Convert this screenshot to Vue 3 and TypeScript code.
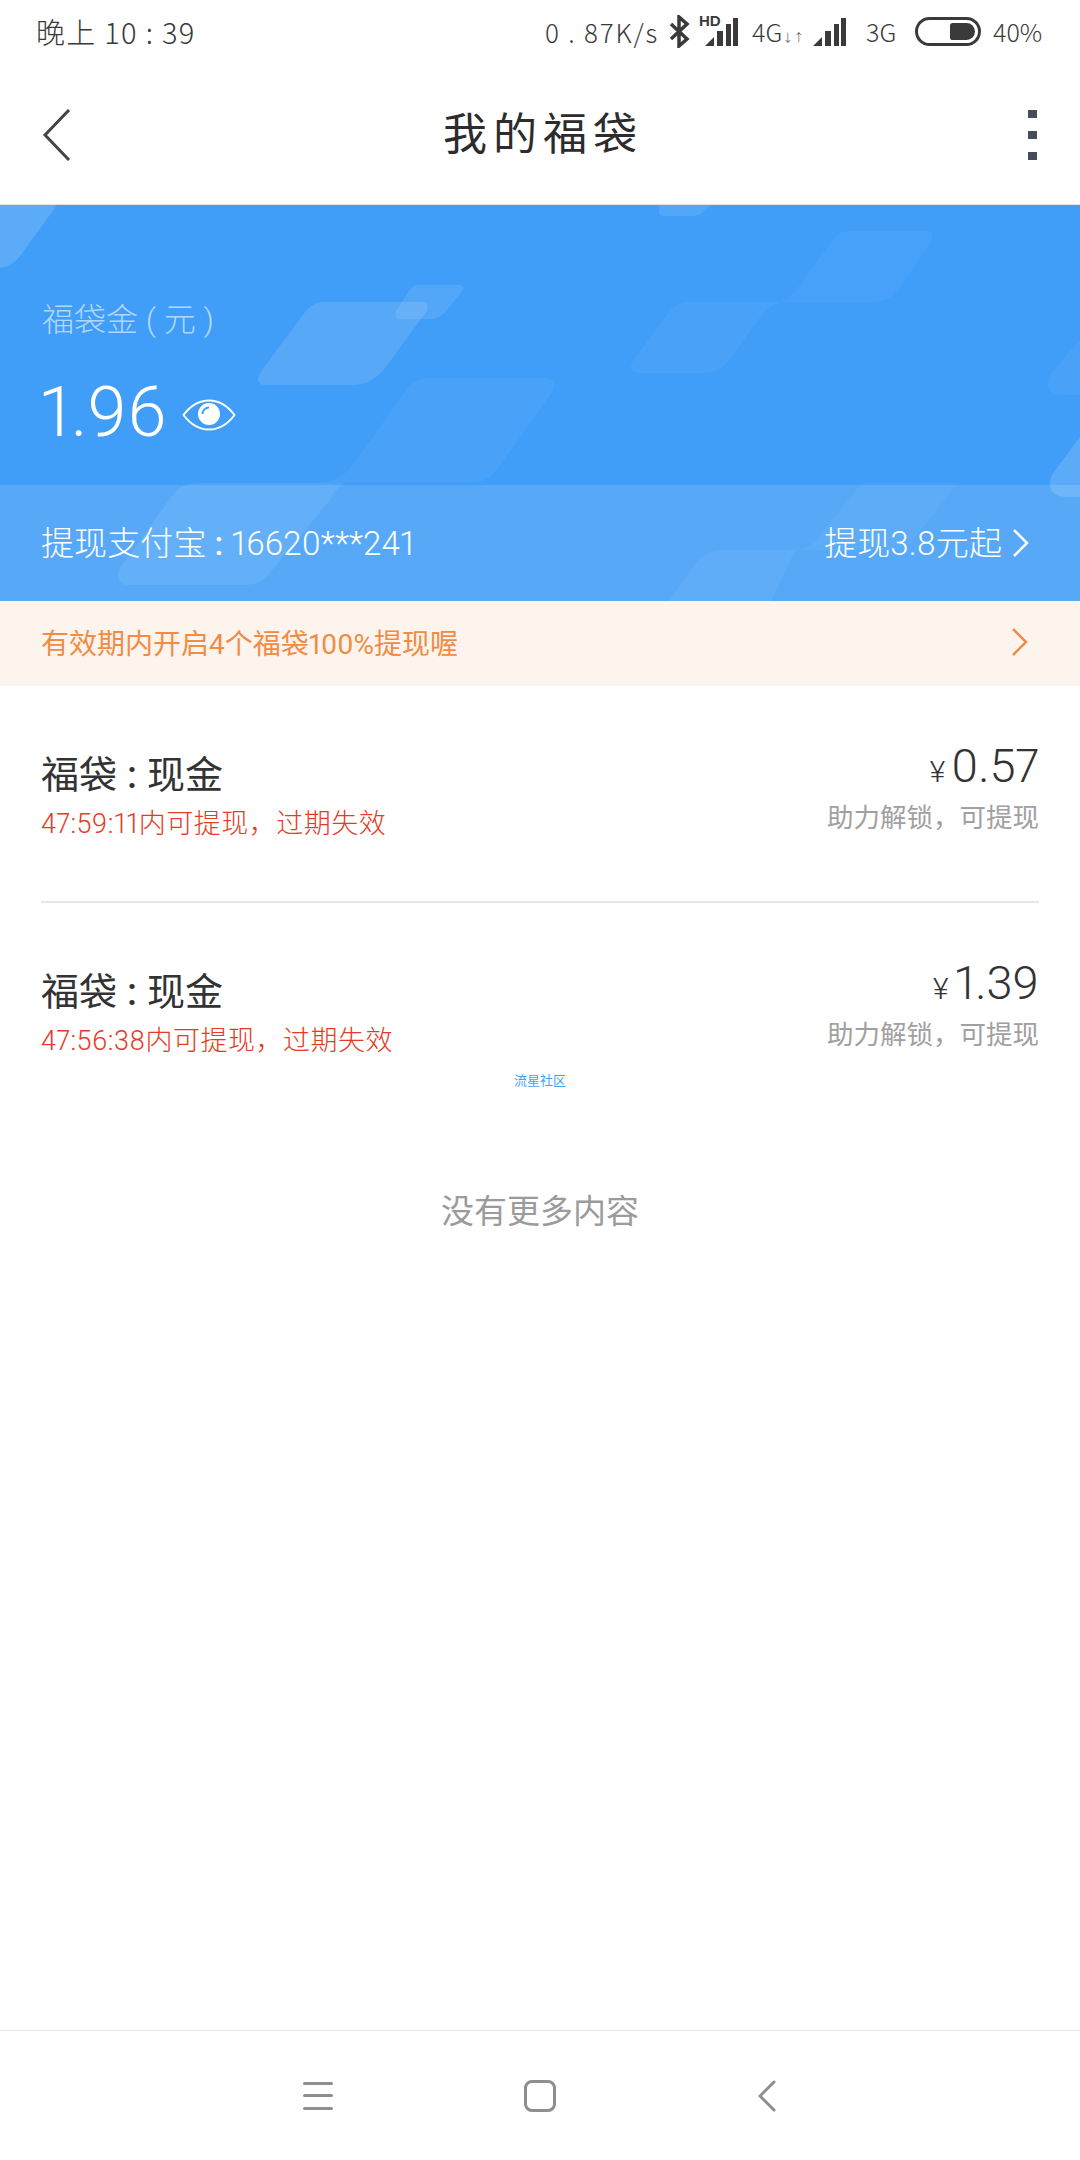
<script setup lang="ts">
interface Bag {
  kind: string
  countdown: string
  amount: string
  note: string
}

const bags: Bag[] = [
  { kind: "现金", countdown: "47:59:11内可提现，过期失效", amount: "0.57", note: "助力解锁，可提现" },
  { kind: "现金", countdown: "47:56:38内可提现，过期失效", amount: "1.39", note: "助力解锁，可提现" }
]

// pale slanted shapes behind the balance card
const shapes: { d: string; o: number }[] = [
  { d: "M0 205H57L20 256Q12 267 0 268Z", o: 0.14 },
  { d: "M322 302H420Q431 302 426 312L385 368Q372 385 352 385H266Q254 385 260 373L302 316Q312 302 322 302Z", o: 0.12 },
  { d: "M418 285H458Q466 285 462 291L447 310Q440 319 430 319H402Q392 319 397 310L408 293Q412 285 418 285Z", o: 0.1 },
  { d: "M428 378H545Q558 378 552 392L498 468Q488 483 468 483H320Q342 480 352 466L405 392Q414 378 428 378Z", o: 0.05 },
  { d: "M200 483H344Q334 490 330 500L272 570Q262 585 245 585H130Q114 585 119 570L172 496Q180 483 200 483Z", o: 0.08 },
  { d: "M690 302H781Q768 306 758 320L729 360Q720 373 700 373H640Q627 373 633 361L668 314Q676 302 690 302Z", o: 0.05 },
  { d: "M848 231H925Q935 231 931 241L898 290Q889 302 875 302H781Q792 298 800 285L833 240Q840 231 848 231Z", o: 0.04 },
  { d: "M659 205H711L703 212Q699 216 690 216H665Q657 216 659 208Z", o: 0.1 },
  { d: "M1080 340V395H1062Q1042 393 1050 375Z", o: 0.05 },
  { d: "M1080 437V497H1065Q1044 495 1052 475Z", o: 0.14 },
  { d: "M725 550H795L771 601H668L695 565Q705 550 725 550Z", o: 0.05 },
  { d: "M862 483H958L905 550H800Q812 548 820 535Z", o: 0.03 }
]
</script>

<template>
  <div class="page">
    <div class="status-bar">
      <span class="status-left">晚上 10 : 39</span>
      <div class="status-right">
        <span class="status-text speed">0 . 87K/s</span>
        <svg class="ic-bt" width="22" height="33" viewBox="0 0 22 33">
          <path d="M3 9L19 24L11 31V2L19 9L3 24" fill="none" stroke="#3a3a3a" stroke-width="3.500" />
        </svg>
        <div class="signal">
          <span class="hd-label">HD</span>
          <svg width="33" height="29" viewBox="0 0 33 29">
            <path d="M0 29L9 20V29ZM12 14H18V29H12ZM21 7H26V29H21ZM28 1H33V29H28Z" fill="#3a3a3a" />
          </svg>
        </div>
        <span class="status-text net">4G<small>↓↑</small></span>
        <svg class="signal-2" width="33" height="29" viewBox="0 0 33 29">
          <path d="M0 29L9 20V29ZM12 14H18V29H12ZM21 7H26V29H21ZM28 1H33V29H28Z" fill="#3a3a3a" />
        </svg>
        <span class="status-text net-3">3G</span>
        <div class="battery"><span class="battery-fill"></span></div>
        <span class="status-text pct">40%</span>
      </div>
    </div>

    <header class="top-nav">
      <svg class="back" width="28" height="52" viewBox="0 0 28 52">
        <path d="M26 1L2 26L26 51" fill="none" stroke="#444" stroke-width="3" />
      </svg>
      <h1 class="title">我的福袋</h1>
      <div class="more"><i></i><i></i><i></i></div>
    </header>

    <section class="hero">
      <svg class="hero-bg" width="1080" height="396" viewBox="0 205 1080 396">
        <path v-for="(s, i) in shapes" :key="i" :d="s.d" fill="#fff" :fill-opacity="s.o" />
      </svg>
      <div class="hero-main">
        <div class="hero-label">福袋金 ( 元 )</div>
        <div class="hero-amount">
          <span class="hero-num">1.96</span>
          <svg width="54" height="32" viewBox="0 0 54 32">
            <path d="M1.500 16C9 6 18 1.500 27 1.500S45 6 52.500 16C45 26 36 30.500 27 30.500S9 26 1.500 16Z" fill="none" stroke="#fff" stroke-width="2" />
            <circle cx="27" cy="15" r="11" fill="#fff" />
            <path d="M20.500 15A6.500 6.500 0 0 1 27 8.500" fill="none" stroke="#42a0f8" stroke-width="2" />
          </svg>
        </div>
      </div>
      <div class="hero-strip">
        <span>提现支付宝<span class="colon">:</span>16620***241</span>
        <span class="withdraw">提现3.8元起
          <svg width="18" height="30" viewBox="0 0 18 30">
            <path d="M2 2L15 15L2 28" fill="none" stroke="#fff" stroke-width="2.500" />
          </svg>
        </span>
      </div>
    </section>

    <div class="notice">
      <span>有效期内开启4个福袋100%提现喔</span>
      <svg width="17" height="30" viewBox="0 0 17 30">
        <path d="M2 2L15 15L2 28" fill="none" stroke="#f08c46" stroke-width="2.500" />
      </svg>
    </div>

    <ul class="bag-list">
      <li v-for="(bag, i) in bags" :key="i" class="bag-row">
        <div class="bag-left">
          <div class="bag-title">福袋<span class="sep">:</span>{{ bag.kind }}</div>
          <div class="bag-countdown">{{ bag.countdown }}</div>
        </div>
        <div class="bag-right">
          <div class="bag-amount"><small>¥</small>{{ bag.amount }}</div>
          <div class="bag-note">{{ bag.note }}</div>
        </div>
      </li>
    </ul>

    <span class="watermark">流星社区</span>
    <div class="no-more">没有更多内容</div>

    <footer class="sys-nav">
      <div class="menu-ic"><i></i><i></i><i></i></div>
      <div class="home-ic"></div>
      <svg class="sys-back" width="18" height="32" viewBox="0 0 18 32">
        <path d="M16 2L2 16L16 30" fill="none" stroke="#8e8e8e" stroke-width="3" stroke-linecap="round" />
      </svg>
    </footer>
  </div>
</template>

<style scoped>
.page {
  position: relative;
  display: flex;
  flex-direction: column;
  width: 1080px;
  height: 2160px;
  background: #fff;
  font-family: Roboto, "Noto Sans CJK SC", sans-serif;
  font-variant-numeric: proportional-nums;
  color: #333;
}

.status-bar {
  display: flex;
  justify-content: space-between;
  align-items: center;
  height: 62px;
  padding: 0 39px 0 36px;
  box-sizing: border-box;
  color: #3a3a3a;
}

.status-left {
  font-size: 29px;
  font-weight: 300;
  letter-spacing: 1.300px;
  font-family: "Noto Sans CJK SC", sans-serif;
}

.status-right {
  display: flex;
  align-items: center;
}

.status-text {
  font-size: 25px;
  font-weight: 300;
  white-space: nowrap;
  font-family: "Noto Sans CJK SC", sans-serif;
}

.speed {
  width: 114px;
  font-size: 26px;
  letter-spacing: 1.800px;
}

.ic-bt {
  margin-left: 9px;
}

.signal {
  position: relative;
  display: flex;
  margin-left: 15px;
}

.hd-label {
  position: absolute;
  left: -6px;
  top: -3px;
  font-size: 15px;
  font-weight: 700;
  line-height: 14px;
  font-family: "Liberation Sans", sans-serif;
}

.net {
  width: 50px;
  margin-left: 14px;
}

.net small {
  font-size: 11px;
}

.signal-2 {
  margin-left: 11px;
}

.net-3 {
  width: 32px;
  margin-left: 20px;
}

.battery {
  display: flex;
  justify-content: flex-end;
  align-items: center;
  width: 66px;
  height: 29px;
  margin-left: 17px;
  padding: 3px;
  box-sizing: border-box;
  border: 3px solid #3a3a3a;
  border-radius: 15px;
}

.battery-fill {
  width: 25px;
  height: 17px;
  background: #3a3a3a;
  border-radius: 3px 9px 9px 3px;
}

.pct {
  width: 48px;
  margin-left: 12px;
}

.top-nav {
  display: grid;
  grid-template-columns: 1fr auto 1fr;
  align-items: center;
  height: 143px;
  padding: 4px 43px 0 43px;
  box-sizing: border-box;
  border-bottom: 1px solid #e3e3e3;
}

.title {
  margin: 0 0 8px;
  font-size: 44px;
  font-weight: 400;
  letter-spacing: 6px;
  text-indent: 6px;
  color: #2c2c2c;
  font-family: "Noto Sans CJK SC", sans-serif;
}

.more {
  display: flex;
  flex-direction: column;
  align-items: flex-end;
  gap: 13px;
}

.more i {
  width: 9px;
  height: 8px;
  background: #474c5a;
}

.hero {
  position: relative;
  height: 396px;
  background: #409ef8;
  overflow: hidden;
  color: #fff;
}

.hero-bg {
  position: absolute;
  left: 0;
  top: 0;
}

.hero-main {
  position: relative;
  height: 280px;
  padding: 95px 0 0 42px;
  box-sizing: border-box;
}

.hero-label {
  font-size: 32px;
  line-height: 40px;
  color: rgba(255, 255, 255, 0.6);
  font-weight: 300;
}

.hero-amount {
  display: flex;
  align-items: flex-end;
  gap: 16px;
  margin-top: 34px;
  margin-left: -2px;
  font-size: 70px;
  font-weight: 300;
  line-height: 76px;
}

.hero-amount svg {
  margin-bottom: 19px;
}

.hero-strip {
  position: relative;
  display: flex;
  justify-content: space-between;
  align-items: center;
  height: 116px;
  padding: 0 50px 5px 41px;
  box-sizing: border-box;
  background: rgba(255, 255, 255, 0.12);
  font-size: 33px;
  font-weight: 300;
  letter-spacing: 0.100px;
}

.colon {
  margin: 0 8px;
  font-weight: 500;
}

.withdraw {
  display: flex;
  align-items: center;
  gap: 10px;
}

.withdraw svg {
  margin-top: 5px;
}

.notice {
  display: flex;
  justify-content: space-between;
  align-items: center;
  height: 85px;
  padding: 0 52px 4px 41px;
  box-sizing: border-box;
  background: #fef4ee;
  color: #f08c46;
  font-size: 28px;
}

.bag-list {
  margin: 0;
  padding: 0 41px;
  list-style: none;
}

.bag-row {
  display: flex;
  justify-content: space-between;
  align-items: flex-start;
  height: 217px;
  padding-top: 54px;
  box-sizing: border-box;
}

.bag-row:first-child {
  border-bottom: 2px solid #e6e6e6;
}

.bag-row:last-child {
  height: 180px;
}

.bag-title {
  margin-top: 5px;
  font-size: 38px;
  line-height: 61px;
}

.sep {
  margin: 0 10px;
  font-weight: 500;
}

.bag-countdown {
  font-size: 27px;
  font-weight: 300;
  line-height: 36px;
  letter-spacing: 0.500px;
  color: #e53a25;
}

.bag-right {
  text-align: right;
}

.bag-amount {
  font-size: 47px;
  line-height: 52px;
  font-weight: 300;
}

.bag-amount small {
  font-size: 30px;
  margin-right: 6px;
}

.bag-note {
  font-size: 26.500px;
  line-height: 40px;
  color: #a0a0a0;
}

.watermark {
  position: absolute;
  left: 514px;
  top: 1073px;
  font-size: 13px;
  line-height: 16px;
  color: #3fa3f7;
}

.no-more {
  margin-top: 106px;
  text-align: center;
  font-size: 33px;
  line-height: 46px;
  color: #9b9b9b;
}

.sys-nav {
  position: absolute;
  left: 0;
  right: 0;
  bottom: 0;
  display: flex;
  align-items: center;
  height: 130px;
  padding-left: 303px;
  box-sizing: border-box;
  border-top: 1px solid #e6e6e6;
  background: #fff;
}

.menu-ic {
  display: flex;
  flex-direction: column;
  gap: 9.500px;
}

.menu-ic i {
  width: 30px;
  height: 3px;
  border-radius: 2px;
  background: #8e8e8e;
}

.home-ic {
  width: 32px;
  height: 32px;
  margin-left: 191px;
  box-sizing: border-box;
  border: 3px solid #8e8e8e;
  border-radius: 8px;
}

.sys-back {
  margin-left: 202px;
}
</style>
